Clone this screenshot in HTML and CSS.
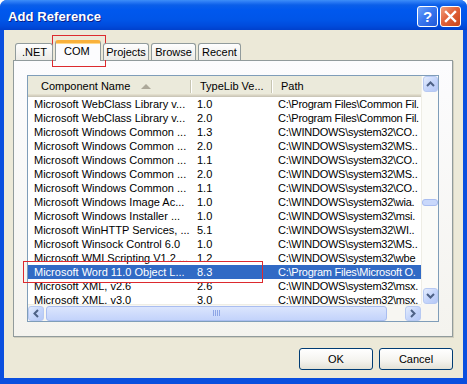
FILE: index.html
```html
<!DOCTYPE html>
<html lang="en">
<head>
    <meta charset="UTF-8">
    <title>Add Reference</title>
    <link rel="stylesheet" href="styles.css">
</head>
<body>
<div class="window">
    <div class="titlebar">
        <span class="title">Add Reference</span>
        <div class="caption">
            <span class="cap help">?</span>
            <span class="cap close">
                <svg width="13" height="13" viewBox="0 0 13 13"><path d="M2 2 L11 11 M11 2 L2 11" stroke="#fff" stroke-width="2.4" stroke-linecap="square"/></svg>
            </span>
        </div>
    </div>

    <div class="content">
        <div class="tabs">
            <div class="tab tab-net">.NET</div>
            <div class="tab tab-com selected">COM</div>
            <div class="tab tab-projects">Projects</div>
            <div class="tab tab-browse">Browse</div>
            <div class="tab tab-recent">Recent</div>
        </div>

        <div class="pane">
            <div class="list">
                <div class="list-main">
                    <div class="header">
                        <div class="hcell h-name">Component Name<span class="sort"></span></div>
                        <div class="hcell h-ver">TypeLib Ve...</div>
                        <div class="hcell h-path">Path</div>
                    </div>
                    <div class="row"><span>Microsoft WebClass Library v...</span><span>1.0</span><span>C:\Program Files\Common Fil.</span></div>
                    <div class="row"><span>Microsoft WebClass Library v...</span><span>2.0</span><span>C:\Program Files\Common Fil.</span></div>
                    <div class="row"><span>Microsoft Windows Common ...</span><span>1.3</span><span>C:\WINDOWS\system32\CO..</span></div>
                    <div class="row"><span>Microsoft Windows Common ...</span><span>2.0</span><span>C:\WINDOWS\system32\MS..</span></div>
                    <div class="row"><span>Microsoft Windows Common ...</span><span>1.1</span><span>C:\WINDOWS\system32\CO..</span></div>
                    <div class="row"><span>Microsoft Windows Common ...</span><span>2.0</span><span>C:\WINDOWS\system32\MS..</span></div>
                    <div class="row"><span>Microsoft Windows Common ...</span><span>1.1</span><span>C:\WINDOWS\system32\CO..</span></div>
                    <div class="row"><span>Microsoft Windows Image Ac...</span><span>1.0</span><span>C:\WINDOWS\system32\wia.</span></div>
                    <div class="row"><span>Microsoft Windows Installer ...</span><span>1.0</span><span>C:\WINDOWS\system32\msi.</span></div>
                    <div class="row"><span>Microsoft WinHTTP Services, ...</span><span>5.1</span><span>C:\WINDOWS\system32\WI..</span></div>
                    <div class="row"><span>Microsoft Winsock Control 6.0</span><span>1.0</span><span>C:\WINDOWS\system32\MS..</span></div>
                    <div class="row"><span>Microsoft WMI Scripting V1.2 ...</span><span>1.2</span><span>C:\WINDOWS\system32\wbe</span></div>
                    <div class="row active"><span>Microsoft Word 11.0 Object L...</span><span>8.3</span><span>C:\Program Files\Microsoft O.</span></div>
                    <div class="row"><span>Microsoft XML, v2.6</span><span>2.6</span><span>C:\WINDOWS\system32\msx.</span></div>
                    <div class="row"><span>Microsoft XML, v3.0</span><span>3.0</span><span>C:\WINDOWS\system32\msx.</span></div>
                </div>

                <div class="vscroll">
                    <div class="sbtn"><svg width="9" height="6" viewBox="0 0 9 6"><path d="M1 5 L4.5 1.5 L8 5" fill="none" stroke="#4d6185" stroke-width="2"/></svg></div>
                    <div class="vtrack"><div class="vthumb"></div></div>
                    <div class="sbtn"><svg width="9" height="6" viewBox="0 0 9 6"><path d="M1 1 L4.5 4.5 L8 1" fill="none" stroke="#4d6185" stroke-width="2"/></svg></div>
                </div>
                <div class="hscroll">
                    <div class="sbtn"><svg width="6" height="9" viewBox="0 0 6 9"><path d="M5 1 L1.5 4.5 L5 8" fill="none" stroke="#4d6185" stroke-width="2"/></svg></div>
                    <div class="htrack"><div class="hthumb"><span class="grip"></span></div></div>
                    <div class="sbtn"><svg width="6" height="9" viewBox="0 0 6 9"><path d="M1 1 L4.5 4.5 L1 8" fill="none" stroke="#4d6185" stroke-width="2"/></svg></div>
                </div>
                <div class="corner"></div>
            </div>
        </div>

        <div class="buttons">
            <button class="btn">OK</button>
            <button class="btn">Cancel</button>
        </div>
    </div>

    <div class="mark mark-tab"></div>
    <div class="mark mark-row"></div>
</div>
</body>
</html>
```

FILE: styles.css
```css
html, body {
    margin: 0;
    padding: 0;
    background: #fff;
}
body {
    font-family: "Liberation Sans", Arial, sans-serif;
    font-size: 11px;
    color: #000;
}
.window {
    position: relative;
    width: 467px;
    height: 384px;
    box-sizing: border-box;
    background: #0a4fdf;
    border-radius: 7px 7px 0 0;
    display: flex;
    flex-direction: column;
    overflow: hidden;
}
.titlebar {
    height: 30px;
    flex: none;
    display: flex;
    align-items: center;
    justify-content: space-between;
    padding: 0 6px 0 8px;
    background: linear-gradient(to bottom, #3d8ff8 0, #2a7af4 2px, #0b5fe9 5px, #0058ee 10px, #0055e8 20px, #004bdc 26px, #0040cc 30px);
}
.title {
    color: #fff;
    font-weight: bold;
    font-size: 13px;
    text-shadow: 1px 1px 0 #0a1f8a;
    letter-spacing: 0.1px;
    margin-top: 3px;
}
.caption {
    display: flex;
    gap: 2px;
    margin-top: 2px;
}
.cap {
    width: 19px;
    height: 19px;
    border: 1px solid #fff;
    border-radius: 3px;
    display: flex;
    align-items: center;
    justify-content: center;
    color: #fff;
    font-weight: bold;
    font-size: 15px;
}
.help {
    background: linear-gradient(135deg, #6fa3fa 0, #3a78f0 45%, #1f58d8 100%);
}
.close {
    background: linear-gradient(135deg, #f0a07e 0, #e2623a 45%, #c94518 100%);
}
.content {
    flex: 1;
    margin: 0 4px 6px 4px;
    background: #ece9d8;
    padding: 10px 10px 0 9px;
    display: flex;
    flex-direction: column;
}
.tabs {
    height: 20px;
    display: flex;
    align-items: flex-end;
    padding-left: 2px;
    gap: 2px;
    position: relative;
    z-index: 1;
}
.tab {
    height: 16px;
    line-height: 16px;
    box-sizing: border-box;
    height: 17px;
    text-align: center;
    border: 1px solid #919b9c;
    border-bottom: none;
    border-radius: 3px 3px 0 0;
    background: linear-gradient(to bottom, #fefefe, #ecebe6);
    white-space: nowrap;
}
.tab-net { width: 38px; text-align: left; padding-left: 6px; }
.tab-com { width: 46px; }
.tab-projects { width: 46px; }
.tab-browse { width: 45px; }
.tab-recent { width: 43px; }
.selected {
    height: 21px;
    line-height: 17px;
    margin-bottom: -1px;
    text-align: left;
    padding-left: 8px;
    border-top: 3px solid #f9b13c;
    box-shadow: inset 0 1px 0 #ffd88a;
    background: #fcfcfe;
}
.pane {
    border: 1px solid #919b9c;
    padding: 14px 13px;
    background: linear-gradient(to bottom, #fcfcfe, #f4f3ee);
    box-shadow: 1px 1px 0 #d0cebf;
}
.list {
    border: 1px solid #7f9db9;
    background: #fff;
    display: grid;
    grid-template-columns: 393px 17px;
    grid-template-rows: 228px 17px;
}
.list-main {
    overflow: hidden;
}
.header {
    height: 21px;
    display: grid;
    grid-template-columns: 162px 81px 1fr;
    background: #ebeadb;
    box-shadow: inset 0 -1px 0 #cbc7b8, inset 0 -2px 0 #d6d2c2, inset 0 -3px 0 #e2decd;
    line-height: 20px;
}
.hcell {
    white-space: nowrap;
    overflow: hidden;
}
.h-name {
    padding-left: 13px;
}
.h-ver, .h-path {
    padding-left: 10px;
    background: linear-gradient(#c7c5b2, #c7c5b2) no-repeat left 0 top 4px / 1px 13px,
                linear-gradient(#fff, #fff) no-repeat left 1px top 4px / 1px 13px;
}
.sort {
    display: inline-block;
    margin-left: 11px;
    border-left: 5px solid transparent;
    border-right: 5px solid transparent;
    border-bottom: 5px solid #aca899;
    vertical-align: 1px;
}
.row {
    height: 14px;
    line-height: 14px;
    display: grid;
    grid-template-columns: 162px 81px 1fr;
    white-space: nowrap;
}
.row span {
    overflow: hidden;
    padding-left: 7px;
}
.row span:first-child {
    padding-left: 6px;
}
.row span:last-child {
    letter-spacing: -0.25px;
}
.row.active {
    background: #316ac5;
    color: #fff;
}
.vscroll {
    display: flex;
    flex-direction: column;
    background: #fbfbf8;
    border-left: 1px solid #eeede5;
    box-sizing: border-box;
}
.hscroll {
    display: flex;
    background: #f7f6f2;
    border-top: 1px solid #eeede5;
    box-sizing: border-box;
}
.sbtn {
    width: 15px;
    height: 15px;
    flex: none;
    margin: 0 1px;
    border: 1px solid #b7c9f2;
    border-radius: 3px;
    background: linear-gradient(135deg, #e5edfd 0, #c6d6fb 50%, #b5c8f6 100%);
    display: flex;
    align-items: center;
    justify-content: center;
    box-sizing: border-box;
}
.vscroll .sbtn {
    width: 15px;
    height: 16px;
}
.hscroll .sbtn {
    width: 16px;
    height: 15px;
    margin: 0;
    align-self: center;
}
.vtrack {
    flex: 1;
}
.vthumb {
    margin: 107px 0 0 0;
    height: 5px;
    border: 1px solid #a9bdf0;
    border-radius: 3px;
    background: #c9d8fb;
}
.htrack {
    flex: 1;
    display: flex;
    align-items: center;
    padding-left: 2px;
}
.hthumb {
    width: 339px;
    height: 13px;
    border: 1px solid #a9bdf0;
    border-radius: 3px;
    background: linear-gradient(to bottom, #dbe5fd, #c3d3fb);
    display: flex;
    align-items: center;
    justify-content: center;
}
.grip {
    width: 7px;
    height: 6px;
    background: repeating-linear-gradient(to right, #8ea6e6 0, #8ea6e6 1px, transparent 1px, transparent 2px);
}
.corner {
    background: #f7f6f2;
}
.buttons {
    display: flex;
    justify-content: flex-end;
    gap: 6px;
    margin-top: 11px;
}
.btn {
    width: 74px;
    height: 22px;
    font-family: "Liberation Sans", Arial, sans-serif;
    font-size: 11px;
    color: #000;
    border: 1px solid #003c74;
    border-radius: 3px;
    background: linear-gradient(to bottom, #fff 0, #f4f3ee 60%, #e3e1d6 100%);
    padding: 0;
}
.mark {
    position: absolute;
    border: 1px solid #dc2a2e;
}
.mark-tab {
    left: 52px;
    top: 35px;
    width: 52px;
    height: 30px;
}
.mark-row {
    left: 23px;
    top: 261px;
    width: 238px;
    height: 20px;
}
```
